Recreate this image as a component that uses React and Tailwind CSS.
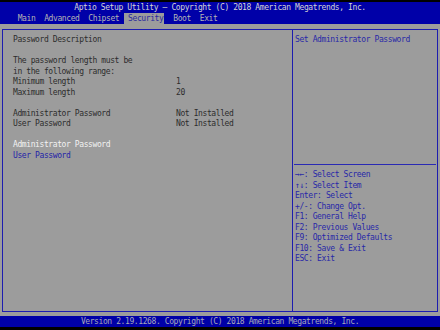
import React from 'react';

const rows = [
  { label: 'Password Description' },
  null,
  { label: 'The password length must be' },
  { label: 'in the following range:' },
  { label: 'Minimum length', value: '1' },
  { label: 'Maximum length', value: '20' },
  null,
  { label: 'Administrator Password', value: 'Not Installed' },
  { label: 'User Password', value: 'Not Installed' },
  null,
  { label: 'Administrator Password', tone: 'active' },
  { label: 'User Password', tone: 'link' },
];

const help = [
  '→←: Select Screen',
  '↑↓: Select Item',
  'Enter: Select',
  '+/-: Change Opt.',
  'F1: General Help',
  'F2: Previous Values',
  'F9: Optimized Defaults',
  'F10: Save & Exit',
  'ESC: Exit',
];

const toneClass = {
  active: 'text-[#f2f2f2]',
  link: 'text-[#2424a8]',
};

const App = () => {
  return (
    <div
      className="w-[440px] h-[330px] bg-black flex flex-col overflow-hidden text-[8px] leading-[10.5px] tracking-[-0.4px] whitespace-pre"
      style={{ fontFamily: '"DejaVu Sans Mono", "Liberation Mono", monospace' }}
    >
      <div className="h-[2px] shrink-0" />

      {/* Title bar + tabs */}
      <div className="h-[22px] shrink-0 bg-[#0000a8] flex flex-col">
        <div className="h-[11px] leading-[11px] text-center text-[#d4d4d4]">
          Aptio Setup Utility – Copyright (C) 2018 American Megatrends, Inc.
        </div>
        <div className="h-[11px] leading-[11px] text-[#b4b4b4]">
          <span>{'    Main  Advanced  Chipset '}</span>
          <span className="inline-block bg-[#9c9c9c] text-[#2a2a9c] pr-[1px]">{' Security'}</span>
          <span>{'  Boot  Exit'}</span>
        </div>
      </div>

      {/* Main frame */}
      <div className="flex-1 bg-[#9c9c9c] pt-[5px] px-[2px] pb-[4px] flex">
        <div className="flex-1 flex border border-[#1c1cb0]">
          <div className="w-[289px] shrink-0 pl-[10px] pt-[5px] text-[#2c2c2c]">
            {rows.map((row, i) =>
              row ? (
                <div key={i} className="flex h-[10.5px]">
                  <span className={`w-[163px] shrink-0 ${row.tone ? toneClass[row.tone] : ''}`}>
                    {row.label}
                  </span>
                  {row.value && <span>{row.value}</span>}
                </div>
              ) : (
                <div key={i} className="h-[10.5px]" />
              )
            )}
          </div>

          <div className="flex-1 border-l border-[#1c1cb0] flex flex-col text-[#2828a8]">
            <div className="h-[134px] shrink-0 pl-[2px] pt-[5px]">Set Administrator Password</div>
            <div className="h-[1px] mx-[1px] bg-[#2a2ab4]" />
            <div className="pl-[2px] pt-[5px]">
              {help.map((line) => (
                <div key={line} className="h-[10.5px]">
                  {line}
                </div>
              ))}
            </div>
          </div>
        </div>
      </div>

      {/* Footer */}
      <div className="h-[11px] shrink-0 bg-[#0000a8] leading-[11px] text-center text-[#a8a8b8]">
        Version 2.19.1268. Copyright (C) 2018 American Megatrends, Inc.
      </div>
      <div className="h-[3px] shrink-0" />
    </div>
  );
};

export default App;
